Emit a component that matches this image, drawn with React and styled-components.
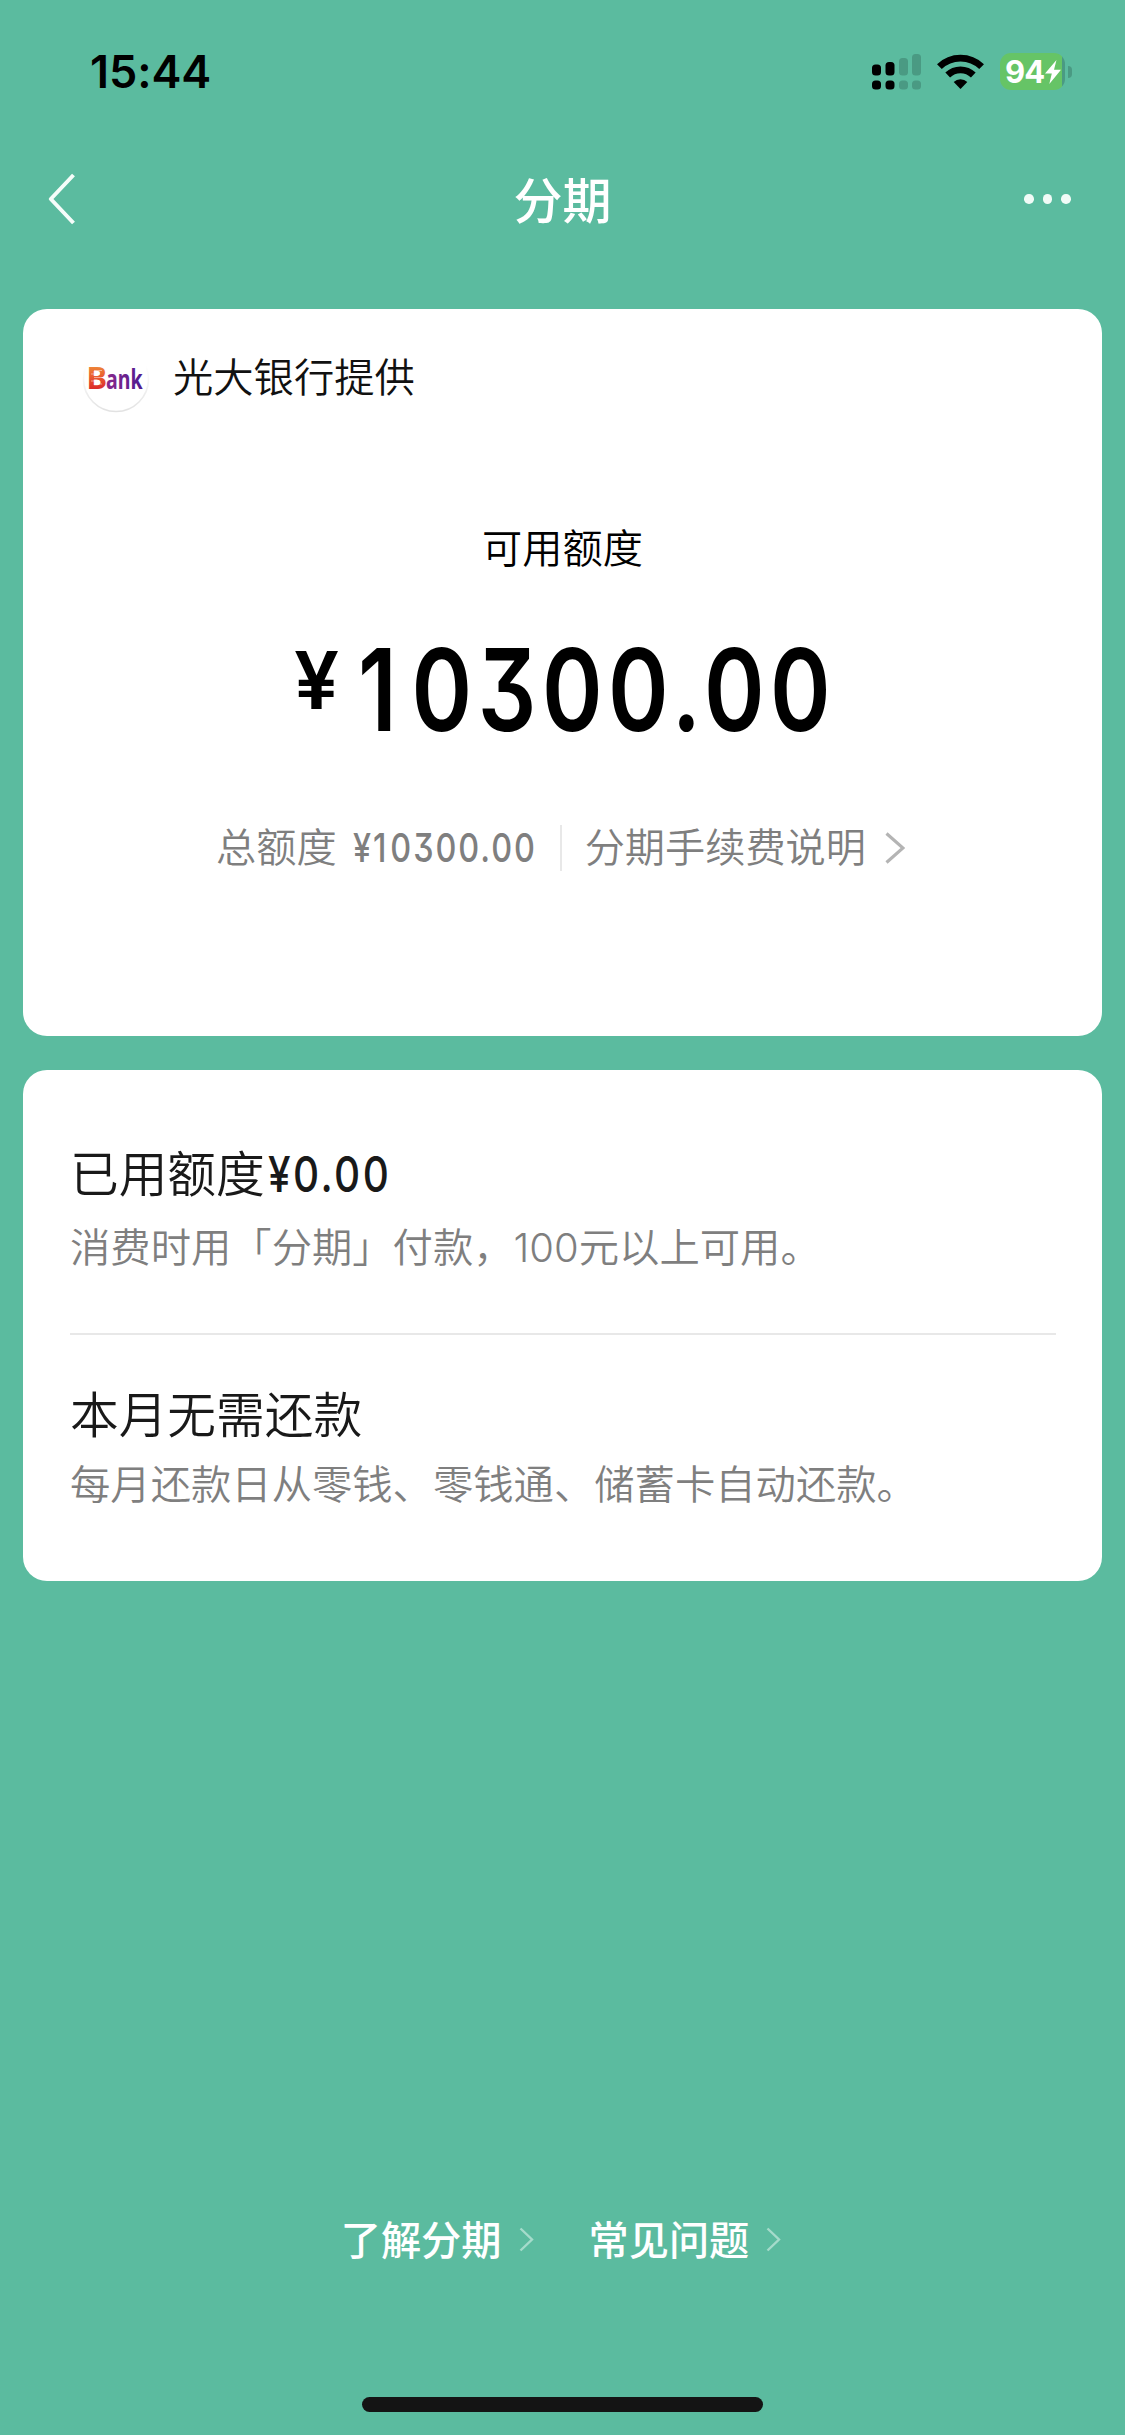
import React from "react";
import styled, { createGlobalStyle } from "styled-components";

const GlobalStyle = createGlobalStyle`
  body {
    margin: 0;
    background: #5bbb9f;
    font-family: "Noto Sans CJK SC", sans-serif;
  }
  * {
    box-sizing: border-box;
  }
`;

const Page = styled.div`
  display: flex;
  flex-direction: column;
  width: 1125px;
  height: 2435px;
  background: #5bbb9f;
  overflow: hidden;
`;

const StatusBar = styled.div`
  display: flex;
  align-items: center;
  justify-content: space-between;
  height: 143px;
  padding: 0 53px 0 90px;
`;

const Time = styled.div`
  font-family: "Inter", sans-serif;
  font-size: 45px;
  font-weight: 600;
  line-height: 56px;
  letter-spacing: -0.1px;
  color: #000;
`;

const StatusIcons = styled.div`
  display: flex;
  align-items: center;
  gap: 16px;
`;

const Battery = styled.div`
  display: flex;
  align-items: center;
  gap: 3px;
`;

const BatteryBody = styled.div`
  display: flex;
  align-items: center;
  width: 65px;
  height: 37px;
  padding-left: 5px;
  border-radius: 11px;
  background: linear-gradient(to right, #66c466 62px, #4a9a83 62px);
`;

const BatteryLevel = styled.span`
  width: 40px;
  font-family: "Inter", sans-serif;
  font-size: 31px;
  font-weight: 700;
  line-height: 37px;
  letter-spacing: -1px;
  color: #fff;
`;

const BatteryCap = styled.div`
  width: 4px;
  height: 12px;
  border-radius: 0 4px 4px 0;
  background: #4a9a83;
`;

const NavBar = styled.header`
  display: grid;
  grid-template-columns: 1fr auto 1fr;
  align-items: center;
  height: 112px;
  padding: 0 54px 0 48px;
`;

const NavTitle = styled.h1`
  margin: 0 0 2px 6px;
  font-size: 49px;
  font-weight: 500;
  line-height: 60px;
  color: #fff;
`;

const MoreDots = styled.div`
  display: flex;
  justify-self: end;
  gap: 9px;
`;

const Dot = styled.span`
  width: 9.6px;
  height: 9.6px;
  border-radius: 50%;
  background: #f1fbf7;
`;

const Cards = styled.main`
  display: flex;
  flex-direction: column;
  gap: 34px;
  padding: 54px 23px 0;
`;

const Card = styled.section`
  height: ${(props) => props.$height}px;
  border-radius: 24px;
  background: #fff;
`;

const Provider = styled.div`
  display: flex;
  align-items: center;
  gap: 23px;
  height: 104px;
  padding: 37px 0 0 59px;
`;

const ProviderName = styled.span`
  margin-top: -9px;
  font-size: 40.3px;
  font-weight: 350;
  line-height: 60px;
  color: #111;
`;

const Available = styled.div`
  display: flex;
  flex-direction: column;
  align-items: center;
  padding-top: 103px;
`;

const AvailableLabel = styled.div`
  font-size: 40.2px;
  font-weight: 350;
  line-height: 60px;
  color: #000;
`;

// condensed numerals with a flat-topped three; $width is the width after scaling
const Digits = styled.span`
  display: inline-block;
  width: ${(props) => props.$width}px;
  font-family: "Inter", sans-serif;
  font-size: ${(props) => props.$size}px;
  font-weight: ${(props) => props.$weight || 500};
  font-feature-settings: "cv09";
  letter-spacing: 0.06em;
  line-height: 1;
  white-space: nowrap;
  transform: scaleX(${(props) => props.$scale || 0.81});
  transform-origin: left;
`;

// the narrow "1" takes nearly the same advance as the other numerals
const One = styled.span`
  padding-right: ${(props) => props.$gap}em;
`;

const Amount = styled.div`
  display: flex;
  align-items: flex-start;
  margin-top: 57px;
  height: 119px;
  padding-left: 5px;
  color: #000;
`;

const AmountSign = styled.div`
  width: 64px;
  padding-top: 7px;
`;

const Details = styled.div`
  display: flex;
  align-items: center;
  margin-top: 68px;
  padding-right: 4px;
  font-size: 40.2px;
  font-weight: 350;
  line-height: 60px;
  color: #7f7f7f;
`;

const DetailText = styled.span`
  margin-top: -5px;
`;

const PlainDigits = styled.span`
  font-family: "Inter", sans-serif;
  font-size: 40px;
  font-weight: 300;
  line-height: 1;
`;

const Total = styled.span`
  display: flex;
  align-items: center;
  gap: 16px;
`;

const Separator = styled.span`
  width: 2px;
  height: 46px;
  margin: 0 23px;
  background: #e8e8e8;
`;

const FeeLink = styled.span`
  display: flex;
  align-items: center;
  gap: 19px;
`;

const Summary = styled.div`
  padding: 68px 46px 0 47px;
`;

const Item = styled.div`
  display: flex;
  flex-direction: column;
  height: ${(props) => props.$height}px;
`;

const ItemTitle = styled.h2`
  margin: 0;
  height: ${(props) => props.$height}px;
  font-size: 48.7px;
  font-weight: 350;
  line-height: 66px;
  color: #191919;

  ${Digits} {
    margin-left: 3px;
  }
`;

const ItemNote = styled.p`
  margin: 0;
  font-size: 40.35px;
  font-weight: 350;
  line-height: 60px;
  white-space: nowrap;
  color: #7f7f7f;
`;

const Line = styled.div`
  height: 2px;
  margin-bottom: 44px;
  background: #e8e8e8;
`;

const Footer = styled.footer`
  display: flex;
  justify-content: center;
  gap: 55px;
  margin-top: auto;
  padding: 0 3px 129px 0;
`;

const FooterLink = styled.a`
  display: flex;
  align-items: center;
  gap: 17px;
  font-size: 40.2px;
  font-weight: 500;
  line-height: 60px;
  color: #fff;
`;

const FooterText = styled.span`
  margin-top: -3px;
`;

const HomeIndicator = styled.div`
  align-self: center;
  width: 401px;
  height: 15px;
  margin-bottom: 23px;
  border-radius: 8px;
  background: #141414;
`;

const Signal = () => (
  <svg width="49" height="36" viewBox="0 0 49 36">
    <rect x="0" y="10.5" width="9" height="11" rx="3.5" />
    <rect x="13.5" y="8" width="9" height="13.5" rx="3.5" />
    <g fill="#4a9a83">
      <rect x="27" y="4" width="9" height="17.5" rx="3.5" />
      <rect x="40" y="0" width="9" height="21.5" rx="3.5" />
      <rect x="27" y="26.5" width="9" height="9" rx="3.5" />
      <rect x="40" y="26.5" width="9" height="9" rx="3.5" />
    </g>
    <rect x="0" y="26.5" width="9" height="9" rx="3.5" />
    <rect x="13.5" y="26.5" width="9" height="9" rx="3.5" />
  </svg>
);

const Wifi = () => (
  <svg width="47" height="35" viewBox="0 0 47 35">
    <g fill="none" stroke="#000" strokeWidth="6.8">
      <path d="M2.4 12.6 A30.3 30.3 0 0 1 44.6 12.6" />
      <path d="M10.7 21 A18.4 18.4 0 0 1 36.3 21" />
    </g>
    <path d="M23.5 35 L16.7 28.1 A9.6 9.6 0 0 1 30.3 28.1 Z" />
  </svg>
);

const Bolt = () => (
  <svg width="16" height="24" viewBox="0 0 16 24">
    <path d="M11.5 0 L0 13.6 H6.8 L4.3 24 L16 9.8 H9 Z" fill="#fff" />
  </svg>
);

const Back = () => (
  <svg width="28" height="52" viewBox="0 0 28 52">
    <path
      d="M25.5 2 L2.8 26 L25.5 50"
      fill="none"
      stroke="#f6fdfa"
      strokeWidth="4"
      strokeLinejoin="round"
    />
  </svg>
);

const Chevron = ({ width, height, color, stroke }) => (
  <svg width={width} height={height} viewBox={`0 0 ${width} ${height}`}>
    <path
      d={`M1.5 1.5 L${width - 2} ${height / 2} L1.5 ${height - 1.5}`}
      fill="none"
      stroke={color}
      strokeWidth={stroke}
    />
  </svg>
);

const BankLogo = () => (
  <svg width="68" height="68" viewBox="0 0 68 68" overflow="visible">
    <defs>
      <linearGradient id="bankB" x1="0" y1="0" x2="0" y2="1">
        <stop offset="0.15" stopColor="#f09a3c" />
        <stop offset="0.55" stopColor="#e8532e" />
        <stop offset="0.85" stopColor="#d8222a" />
      </linearGradient>
      <linearGradient id="bankInk" x1="0" y1="0" x2="1" y2="0">
        <stop offset="0" stopColor="#8a2a8c" />
        <stop offset="1" stopColor="#4d1a90" />
      </linearGradient>
      <linearGradient id="ring" x1="0" y1="0" x2="0" y2="1">
        <stop offset="0.3" stopColor="#fff" />
        <stop offset="1" stopColor="#e2e2e2" />
      </linearGradient>
    </defs>
    <circle cx="34" cy="33" r="32.5" fill="#fff" stroke="url(#ring)" strokeWidth="1.6" />
    <g fontFamily="Noto Sans, sans-serif" fontWeight="700">
      <text x="4.5" y="42.5" fontSize="31" fill="url(#bankB)">
        B
      </text>
      <text x="24" y="42.5" fontSize="26" textLength="36.5" lengthAdjust="spacingAndGlyphs" fill="url(#bankInk)">
        ank
      </text>
    </g>
    <path
      d="M12 24.5 H20 M9 28 H18 M12 31.5 H22 M9 35 H17 M12 38 H20"
      stroke="#fff"
      strokeWidth="0.8"
      opacity="0.6"
    />
  </svg>
);

const footerLinks = ["了解分期", "常见问题"];

export default function App() {
  return (
    <Page>
      <GlobalStyle />
      <StatusBar>
        <Time>15:44</Time>
        <StatusIcons>
          <Signal />
          <Wifi />
          <Battery>
            <BatteryBody>
              <BatteryLevel>94</BatteryLevel>
              <Bolt />
            </BatteryBody>
            <BatteryCap />
          </Battery>
        </StatusIcons>
      </StatusBar>

      <NavBar>
        <Back />
        <NavTitle>分期</NavTitle>
        <MoreDots>
          <Dot />
          <Dot />
          <Dot />
        </MoreDots>
      </NavBar>

      <Cards>
        <Card $height={727}>
          <Provider>
            <BankLogo />
            <ProviderName>光大银行提供</ProviderName>
          </Provider>
          <Available>
            <AvailableLabel>可用额度</AvailableLabel>
            <Amount>
              <AmountSign>
                <Digits $size={80} $width={44} $weight={600} $scale={1}>
                  ¥
                </Digits>
              </AmountSign>
              <Digits $size={113.5} $width={478} $weight={600}>
                <One $gap={0.1}>1</One>0300.00
              </Digits>
            </Amount>
            <Details>
              <Total>
                <DetailText>总额度</DetailText>
                <Digits $size={40} $width={184}>
                  ¥<One $gap={0.06}>1</One>0300.00
                </Digits>
              </Total>
              <Separator />
              <FeeLink>
                <DetailText>分期手续费说明</DetailText>
                <Chevron width={20} height={32} color="#b4b4b4" stroke={3.2} />
              </FeeLink>
            </Details>
          </Available>
        </Card>

        <Card $height={511}>
          <Summary>
            <Item $height={195}>
              <ItemTitle $height={77}>
                已用额度
                <Digits $size={50} $width={130}>
                  ¥0.00
                </Digits>
              </ItemTitle>
              <ItemNote>
                消费时用「分期」付款，<PlainDigits>100</PlainDigits>元以上可用。
              </ItemNote>
            </Item>
            <Line />
            <Item $height={150}>
              <ItemTitle $height={73}>本月无需还款</ItemTitle>
              <ItemNote>每月还款日从零钱、零钱通、储蓄卡自动还款。</ItemNote>
            </Item>
          </Summary>
        </Card>
      </Cards>

      <Footer>
        {footerLinks.map((label) => (
          <FooterLink key={label}>
            <FooterText>{label}</FooterText>
            <Chevron width={15} height={25} color="#a5dbcb" stroke={2.4} />
          </FooterLink>
        ))}
      </Footer>
      <HomeIndicator />
    </Page>
  );
}
